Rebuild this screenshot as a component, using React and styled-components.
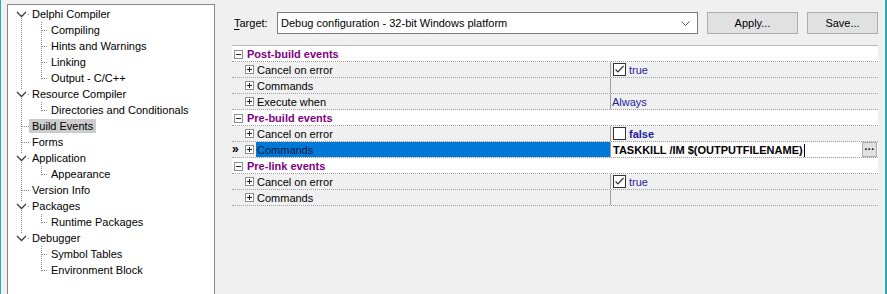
import React from 'react';
import styled, { createGlobalStyle } from 'styled-components';

const GlobalStyle = createGlobalStyle`
  html, body {
    margin: 0;
    padding: 0;
    background: #f0f0f0;
    overflow: hidden;
  }
  body {
    font-family: Tahoma, "Liberation Sans", Arial, sans-serif;
    font-size: 11px;
    color: #000;
  }
`;

const tree = [
  { label: 'Delphi Compiler', children: ['Compiling', 'Hints and Warnings', 'Linking', 'Output - C/C++'] },
  { label: 'Resource Compiler', children: ['Directories and Conditionals'] },
  { label: 'Build Events', selected: true },
  { label: 'Forms' },
  { label: 'Application', children: ['Appearance'] },
  { label: 'Version Info' },
  { label: 'Packages', children: ['Runtime Packages'] },
  { label: 'Debugger', children: ['Symbol Tables', 'Environment Block'] },
];

const groups = [
  {
    title: 'Post-build events',
    items: [
      { name: 'Cancel on error', check: true, value: 'true' },
      { name: 'Commands' },
      { name: 'Execute when', value: 'Always' },
    ],
  },
  {
    title: 'Pre-build events',
    items: [
      { name: 'Cancel on error', check: false, value: 'false', bold: true },
      { name: 'Commands', edit: 'TASKKILL /IM $(OUTPUTFILENAME)', selected: true },
    ],
  },
  {
    title: 'Pre-link events',
    items: [
      { name: 'Cancel on error', check: true, value: 'true' },
      { name: 'Commands' },
    ],
  },
];

const DOT = '#8f8f8f';

// tree connector drawings
const TopGuide = ({ expandable, first, last }) => (
  <GuideSvg width="18" height="16">
    {expandable ? (
      <>
        {!first && <line x1="10.5" y1="0" x2="10.5" y2="4" stroke={DOT} strokeDasharray="1 1" />}
        <polyline points="6,6 10.5,10.5 15,6" fill="none" stroke="#3c3c3c" strokeWidth="1.3" />
        <rect x="17" y="8" width="1" height="1" fill={DOT} />
        {!last && <line x1="10.5" y1="12" x2="10.5" y2="16" stroke={DOT} strokeDasharray="1 1" />}
      </>
    ) : (
      <>
        <line x1="10.5" y1="0" x2="10.5" y2={last ? 9 : 16} stroke={DOT} strokeDasharray="1 1" />
        <line x1="11" y1="8.5" x2="18" y2="8.5" stroke={DOT} strokeDasharray="1 1" />
      </>
    )}
  </GuideSvg>
);

const ChildGuide = ({ parentLast, last }) => (
  <>
    <GuideSvg width="18" height="16">
      {!parentLast && <line x1="10.5" y1="0" x2="10.5" y2="16" stroke={DOT} strokeDasharray="1 1" />}
    </GuideSvg>
    <GuideSvg width="19" height="16">
      <line x1="12.5" y1="0" x2="12.5" y2={last ? 9 : 16} stroke={DOT} strokeDasharray="1 1" />
      <line x1="13" y1="8.5" x2="19" y2="8.5" stroke={DOT} strokeDasharray="1 1" />
    </GuideSvg>
  </>
);

const Expander = ({ open }) => (
  <ExpanderSvg width="9" height="9">
    <rect x="0.5" y="0.5" width="8" height="8" fill="#fff" stroke="#8e8e8e" />
    <line x1="2" y1="4.5" x2="7" y2="4.5" stroke="#222" />
    {!open && <line x1="4.5" y1="2" x2="4.5" y2="7" stroke="#222" />}
  </ExpanderSvg>
);

const CheckBox = ({ checked }) => (
  <CheckSvg width="13" height="13">
    <rect x="0.5" y="0.5" width="12" height="12" fill="#fff" stroke="#333" />
    {checked && <polyline points="2.5,6.5 5,9 10.5,3" fill="none" stroke="#333" strokeWidth="1.2" />}
  </CheckSvg>
);

const App = () => {
  return (
    <>
      <GlobalStyle />
      <Window>
        <TreePanel>
          {tree.map((node, i) => {
            const lastTop = i === tree.length - 1;
            return (
              <React.Fragment key={node.label}>
                <TreeRow>
                  <TopGuide expandable={!!node.children} first={i === 0} last={lastTop} />
                  <Label $selected={node.selected}>{node.label}</Label>
                </TreeRow>
                {node.children &&
                  node.children.map((child, j) => (
                    <TreeRow key={child}>
                      <ChildGuide parentLast={lastTop} last={j === node.children.length - 1} />
                      <Label>{child}</Label>
                    </TreeRow>
                  ))}
              </React.Fragment>
            );
          })}
        </TreePanel>

        <RightPane>
          <TargetBar>
            <TargetLabel>
              <u>T</u>arget:
            </TargetLabel>
            <Combo>
              <span>Debug configuration - 32-bit Windows platform</span>
              <svg width="9" height="5">
                <polyline points="0.5,0.5 4.5,4.5 8.5,0.5" fill="none" stroke="#555" />
              </svg>
            </Combo>
            <Button $w={91}>Apply...</Button>
            <Button $w={71}>Save...</Button>
          </TargetBar>

          <Grid>
            {groups.map((g) => (
              <React.Fragment key={g.title}>
                <GroupRow>
                  <Expander open />
                  <GroupTitle>{g.title}</GroupTitle>
                </GroupRow>
                {g.items.map((it, k) => (
                  <ItemRow key={k}>
                    <NameCell>
                      <Marker>{it.selected ? '»' : ''}</Marker>
                      <Expander />
                      <ItemName $selected={it.selected}>{it.name}</ItemName>
                    </NameCell>
                    <ValueCell $edit={!!it.edit}>
                      {it.check !== undefined && <CheckBox checked={it.check} />}
                      {it.value && (
                        <ValueText $bold={it.bold} $indent={it.check !== undefined}>
                          {it.value}
                        </ValueText>
                      )}
                      {it.edit && (
                        <>
                          <EditText>
                            {it.edit}
                            <Caret />
                          </EditText>
                          <EllipsisButton>···</EllipsisButton>
                        </>
                      )}
                    </ValueCell>
                  </ItemRow>
                ))}
              </React.Fragment>
            ))}
          </Grid>
        </RightPane>
      </Window>
    </>
  );
};

// Styled Components
const Window = styled.div`
  display: flex;
  width: 887px;
  height: 294px;
  box-sizing: border-box;
  border-left: 1px solid #2aa6b4;
  border-right: 2px solid #2aa6b4;
  padding-left: 6px;
  overflow: hidden;
`;

const TreePanel = styled.div`
  width: 208px;
  height: 300px;
  flex-shrink: 0;
  box-sizing: border-box;
  margin-top: 4px;
  padding: 1px 0 0 3px;
  background: #fff;
  border: 1px solid #828790;
`;

const TreeRow = styled.div`
  display: flex;
  align-items: center;
  height: 16px;
`;

const GuideSvg = styled.svg`
  display: block;
  flex-shrink: 0;
`;

const Label = styled.span`
  padding: 0 3px;
  line-height: 14px;
  white-space: nowrap;
  background: ${(p) => (p.$selected ? '#cccccc' : 'transparent')};
`;

const RightPane = styled.div`
  flex: 1;
  display: flex;
  flex-direction: column;
  padding: 12px 6px 0 17px;
  min-width: 0;
`;

const TargetBar = styled.div`
  display: flex;
  align-items: center;
  height: 22px;
  gap: 9px;
`;

const TargetLabel = styled.span`
  width: 34px;
  margin-left: 2px;
  white-space: nowrap;
  u {
    text-decoration-thickness: 1px;
    text-underline-offset: 2px;
  }
`;

const Combo = styled.div`
  width: 421px;
  height: 22px;
  box-sizing: border-box;
  display: flex;
  align-items: center;
  justify-content: space-between;
  padding: 0 7px 0 3px;
  background: #fff;
  border: 1px solid #7a7a7a;
  white-space: nowrap;
`;

const Button = styled.div`
  width: ${(p) => p.$w}px;
  height: 22px;
  box-sizing: border-box;
  display: flex;
  align-items: center;
  justify-content: center;
  background: #e1e1e1;
  border: 1px solid #adadad;
`;

const Grid = styled.div`
  margin-top: 11px;
  margin-right: 1px;
  border-top: 1px solid #b9b9b9;
`;

const GroupRow = styled.div`
  display: flex;
  align-items: center;
  height: 16px;
  box-sizing: border-box;
  padding: 1px 0 0 2px;
  gap: 4px;
  background: #fff;
  border-bottom: 1px dotted #a0a0a0;
`;

const ExpanderSvg = styled.svg`
  display: block;
  flex-shrink: 0;
`;

const GroupTitle = styled.span`
  font-weight: bold;
  color: #800080;
  white-space: nowrap;
`;

const ItemRow = styled.div`
  display: grid;
  grid-template-columns: 379px 1fr;
  height: 16px;
  box-sizing: border-box;
  background: #f0f0f0;
  border-bottom: 1px dotted #a0a0a0;
`;

const NameCell = styled.div`
  display: flex;
  align-items: center;
  height: 15px;
  border-right: 1px solid #a0a0a0;
  box-sizing: border-box;
`;

const Marker = styled.span`
  width: 13px;
  flex-shrink: 0;
  font-size: 12px;
  font-weight: bold;
  line-height: 15px;
  letter-spacing: -2px;
  text-align: left;
`;

const ItemName = styled.span`
  flex: 1;
  align-self: stretch;
  margin-left: 2px;
  padding: 1px 0 0 1px;
  line-height: 15px;
  white-space: nowrap;
  color: ${(p) => (p.$selected ? '#0a1a40' : '#000')};
  background: ${(p) => (p.$selected ? '#0078d7' : 'transparent')};
`;

const ValueCell = styled.div`
  display: flex;
  align-items: center;
  height: 15px;
  padding-left: ${(p) => (p.$edit ? '2px' : '1px')};
  background: ${(p) => (p.$edit ? '#fff' : 'transparent')};
  white-space: nowrap;
`;

const CheckSvg = styled.svg`
  display: block;
  flex-shrink: 0;
  margin-left: 1px;
`;

const ValueText = styled.span`
  margin-left: ${(p) => (p.$indent ? '3px' : '0')};
  padding-top: 1px;
  color: #1c1c9c;
  font-weight: ${(p) => (p.$bold ? 'bold' : 'normal')};
`;

const EditText = styled.span`
  flex: 1;
  padding-top: 1px;
  font-weight: bold;
  display: flex;
  align-items: center;
`;

const Caret = styled.span`
  display: inline-block;
  width: 1px;
  height: 13px;
  margin-left: 1px;
  background: #000;
`;

const EllipsisButton = styled.div`
  width: 15px;
  height: 15px;
  box-sizing: border-box;
  margin-right: 1px;
  display: flex;
  align-items: center;
  justify-content: center;
  font-weight: bold;
  font-size: 10px;
  background: #e1e1e1;
  border: 1px solid #adadad;
`;

export default App;
